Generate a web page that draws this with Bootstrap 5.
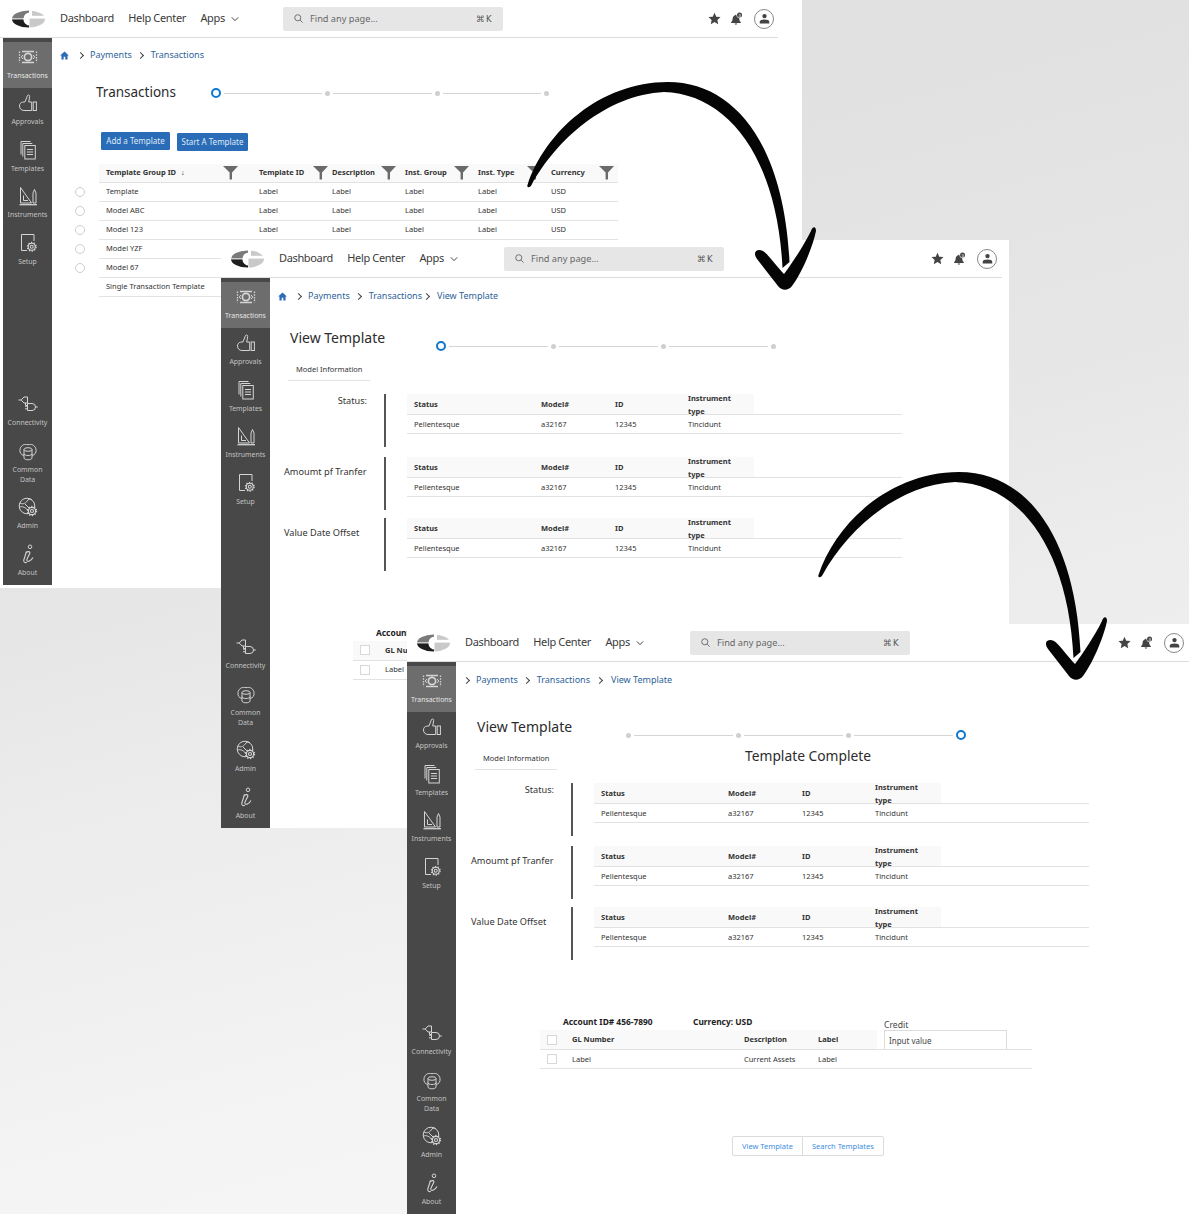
<!DOCTYPE html>
<html lang="en">
<head>
<meta charset="utf-8">
<title>Template flow</title>
<link rel="stylesheet" href="https://cdn.jsdelivr.net/npm/bootstrap@5.3.0/dist/css/bootstrap.min.css">
<style>
:root{--ink:#3d3d3d;--rail:#484848;--rule:#e2e2e2;--linkc:#2d6399}
html,body{margin:0;padding:0}
body{font-family:"Noto Sans","Open Sans",sans-serif;color:var(--ink);background:#fff}
.board{position:relative;width:1189px;height:1214px;overflow:hidden;background:linear-gradient(165deg,#e1e1e1 20%,#e6e6e6 41%,#ececec 55%,#f5f5f5 82%)}
.shot{position:absolute;background:#fff;display:flex;flex-direction:column;overflow:hidden}
.shot-a{left:0;top:0;width:802px;height:588px;z-index:1}
.shot-b{left:221px;top:240px;width:788px;height:588px;z-index:2}
.shot-c{left:407px;top:624px;width:782px;height:590px;z-index:3}
.app-bar{height:38px;flex:none;border-bottom:1px solid #dcdcdc;flex-wrap:nowrap;justify-content:flex-start;padding:0}
.shot-a .app-bar{margin-right:24px}
.shot-b .app-bar{margin-right:7px}
.brand-mark{width:33px;height:18px;margin-left:10px;margin-right:15px;flex:none;display:block}
.shot-a .brand-mark{margin-left:12px}
.top-links{width:225px;flex:none;gap:14.5px;display:flex;align-items:center;font-size:11px;letter-spacing:-.35px;color:#3a3a3a;margin:0;padding:0;list-style:none}
.shot-a .top-links{width:223px}
.top-links .nav-link{padding:0;color:#3a3a3a}
.top-links svg{width:8px;height:8px;margin-left:6px}
.finder{width:220px;height:24px;background:#e6e6e6;border-radius:2px;display:flex;align-items:center;padding:0 10px 0 11px;font-size:9.2px;color:#666;flex:none}
.finder svg{width:9px;height:9px;margin-right:7px;color:#666}
.finder kbd{margin-left:auto;background:none;color:#555;padding:0;letter-spacing:1.5px;font:8.5px "DejaVu Sans",sans-serif}
.tools{display:flex;align-items:center;margin-left:205px;color:#444}
.shot-b .tools{margin-left:207px}
.shot-c .tools{margin-left:208px}
.tools .ico{width:13px;height:13px}
.tools .ico+.ico{margin-left:9px}
.who{width:20px;height:20px;border-radius:50%;border:1px solid #888;display:flex;align-items:center;justify-content:center;margin-left:11px}
.who svg{width:11px;height:11px}
.body-row{flex:1;display:flex;min-height:0}
.rail{width:49px;flex:none;background:var(--rail);display:flex;flex-direction:column;padding-top:4px;color:#c2c2c2}
.shot-a .rail{margin-left:3px;margin-bottom:3px}
.rail-item{display:flex;flex-direction:column;align-items:center;padding:5px 0 7.4px;font-size:6.9px;line-height:10px;text-align:center}
.rail-item svg{width:20px;height:20px;margin-bottom:4px;color:#d4d4d4}
.rail-item.on{background:#6d6d6d;color:#e6e6e6}
.rail-low{margin-top:auto}
.pane{flex:1;min-width:0;position:relative}
.shot-c .pane{padding-left:1px}
.crumbs{margin:11px 0 0 8px;height:14px;align-items:center;font-size:9px;flex-wrap:nowrap}
.shot-a .crumbs{margin-top:10px}
.shot-c .crumbs{margin-left:0}
.crumbs .breadcrumb-item{padding:0;color:var(--linkc);white-space:nowrap;display:flex;align-items:center}
.crumbs .breadcrumb-item::before{content:"";float:none;padding:0;display:block;width:5px;height:5px;border-top:1px solid #444;border-right:1px solid #444;transform:rotate(45deg);margin:0 7.5px 0 6.5px}
.crumbs .home-crumb::before{content:none}
.crumbs .tight::before{margin:0 7.5px 0 2.5px}
.crumbs .nudge::before{margin:0 8.5px 0 7.5px}
.crumbs a{color:var(--linkc);text-decoration:none}
.crumbs svg{width:9px;height:9px;display:block;margin-right:2px}
.head-row{display:flex;align-items:flex-start;height:24px;margin:23px 0 0 20px}
.shot-a .head-row{margin:18px 0 0 44px}
.shot-c .head-row{margin-top:28px}
.page-title{font-size:14px;line-height:24px;margin:0;font-weight:400;color:#2c2c2c;width:146px;flex:none}
.shot-a .page-title{width:115px;font-size:13.5px}
.shot-c .page-title{width:149px}
.stepper{display:flex;align-items:center;width:340px;height:10px;margin-top:15px;gap:3px}
.shot-a .stepper{margin-top:8px;width:338px}
.step-line{flex:1;height:1px;background:#d5d5d5}
.step-dot{width:5px;height:5px;border-radius:50%;background:#cfcfcf;flex:none}
.step-now{width:10px;height:10px;border-radius:50%;border:2.5px solid #0b78d1;background:#fff;flex:none}
.act-row{gap:7px;margin:28px 0 0 49px;align-items:flex-start}
.act-row .btn{background:#2b6cb8;border-color:#2b6cb8;color:#dfe9f5;font-size:8px;line-height:12px;padding:2px 0;height:18px;border-radius:1px}
.act-row .btn:first-child{width:69px}
.act-row .btn+.btn{width:71px;margin-top:1px}
.list-tbl{table-layout:fixed;width:548px;margin:13px 0 0 18px;font-size:7.5px;color:#333}
.list-tbl th,.list-tbl td{padding:0 7px;height:19px;vertical-align:middle;border-bottom:1px solid var(--rule);color:#333;background:transparent;box-shadow:none;white-space:nowrap}
.list-tbl th{background:#f9f9f9;font-weight:700;height:18px}
.list-tbl .pick{width:29px;padding:0;border:0;background:transparent;text-align:left}
.list-tbl .w1{width:153px}.list-tbl .w2{width:73px}.list-tbl .w3{width:74px}
.th-flex{display:flex;align-items:center;justify-content:space-between}
.th-flex svg{width:15px;height:15px;flex:none;color:#6a6a6a}
.w1 .th-flex{padding-right:7px}
.w2 .th-flex{margin-right:-9.5px}
.w2.pr-a .th-flex{margin-right:-4.5px}
.pr-b .th-flex{margin-right:-2.5px}
.arr{font-weight:400;margin-left:3px}
.pick-dot{width:10px;height:10px;margin:0 0 0 5px;border-color:#cfcfcf;display:block}
.tab-row{display:flex;align-items:flex-start;margin:8px 0 0 18px;height:23px}
.tab-name{width:82px;padding:0 0 0 8px;height:23px;line-height:22px;font-size:7.5px;border-bottom:1px solid var(--rule);color:#333;white-space:nowrap;margin:0;flex:none}
.done-title{font-size:13.8px;line-height:20px;margin:-1px 0 0 188px;white-space:nowrap;font-weight:400;color:#2c2c2c}
.facts{display:flex;margin:10px 0 0 14px;height:53px}
.facts-first{margin-top:13px}
.facts-last{margin-top:8px}
.fact-name{width:83px;flex:none;font-size:9.2px;line-height:14px;padding-top:8px;white-space:nowrap;color:#333}
.facts-first .fact-name{padding-top:0;text-align:right}
.fact-rule{width:1.5px;background:#555;margin-left:17px;flex:none}
.fact-tbl{table-layout:fixed;width:495px;margin:0 0 0 21.5px;font-size:7.5px;align-self:flex-start}
.fact-tbl th,.fact-tbl td{padding:1px 7px 0;border-bottom:1px solid var(--rule);vertical-align:middle;color:#333;background:transparent;box-shadow:none;height:19px}
.fact-tbl th{height:20px;background:#f9f9f9;font-weight:700}
.fact-tbl .c1{width:127px}.fact-tbl .c2{width:74px}.fact-tbl .c3{width:73px}.fact-tbl .c4{width:73px}
.fact-tbl th.c5{width:148px;background:transparent}
.wrap-th{display:block;line-height:12.5px;margin:-3px 0;white-space:normal}
.acct{margin:55px 0 0 83px;width:492px}
.acct-top{display:flex;align-items:flex-end;height:14px;font-size:8.4px;font-weight:700;color:#222;padding-left:23px;white-space:nowrap}
.acct-top span{width:130px;flex:none}
.acct-top span+span{width:191px}
.acct-top label{font-weight:400;font-size:8.6px;color:#444;margin:0 0 -2px;line-height:12px}
.acct-tbl{table-layout:fixed;width:492px;margin:1px 0 0;font-size:7.5px}
.acct-tbl th,.acct-tbl td{padding:1px 7px 0;height:19px;border-bottom:1px solid var(--rule);vertical-align:middle;color:#333;background:transparent;box-shadow:none;white-space:nowrap}
.acct-tbl th{background:#f9f9f9;font-weight:700}
.acct-tbl .a0{width:25px;padding:0}.acct-tbl .a1{width:172px}.acct-tbl .a2{width:74px}.acct-tbl .a3{width:66px}.acct-tbl .a4{width:155px;background:#fff;vertical-align:top;padding-top:0}
input.box-tick[type=checkbox]{width:10px;height:10px;margin:0 0 0 7px;border-radius:0;border-color:#d8d8d8;display:block}
.credit-in{width:123px;height:19px;min-height:0;font-size:8px;padding:0 4px;border-radius:0;border-color:#dcdcdc;border-bottom:0;color:#444;background:#fff}
.foot-btns{margin:67px 0 0 192px}
.foot-btns .btn{background:#fff;border-color:#dcdcdc;color:#3d8ee2;font-size:7.5px;height:20px;line-height:18px;padding:0 9px;border-radius:2px}
.arrows{position:absolute;left:0;top:0;width:1189px;height:1214px;z-index:5;pointer-events:none}
</style>
</head>
<body>
<svg width="0" height="0" style="position:absolute" aria-hidden="true">
<defs>
<clipPath id="logoclip"><ellipse cx="16.5" cy="9" rx="16.5" ry="8.6"/></clipPath>
<symbol id="i-logo" viewBox="0 0 33 18"><g clip-path="url(#logoclip)"><rect x="0" y="0" width="17" height="8.4" fill="#7a7a7a"/><rect x="0" y="9.4" width="17" height="9" fill="#1e1e1e"/><circle cx="18" cy="9" r="6.6" fill="#fff"/><rect x="20" y="0" width="13" height="5.8" fill="#c9c9c9"/><rect x="17.5" y="8.6" width="15.5" height="10" fill="#c9c9c9"/></g></symbol>
<symbol id="i-chev" viewBox="0 0 10 10"><path d="M1 3l4 4 4-4" fill="none" stroke="currentColor" stroke-width="1.2"/></symbol>
<symbol id="i-search" viewBox="0 0 10 10"><circle cx="4.2" cy="4.2" r="3.4" fill="none" stroke="currentColor"/><path d="M6.8 6.8L9.6 9.6" stroke="currentColor"/></symbol>
<symbol id="i-star" viewBox="0 0 14 14"><path d="M7 .8l1.9 4.2 4.6.5-3.4 3.1.9 4.6L7 10.9l-4 2.3.9-4.6L.5 5.5l4.6-.5z" fill="currentColor"/></symbol>
<symbol id="i-bell" viewBox="0 0 14 14"><path d="M5.600 3.400C3.600 4 2.800 5.600 2.800 7.200c0 1.600-.6 2.800-1.600 3.700v.9h10.400v-.9c-1-.9-1.600-2.100-1.600-3.700 0-1.600-.8-3.200-2.800-3.800C7 2.500 5.800 2.500 5.600 3.400zM5 12.400h2.800c0 1.600-2.800 1.600-2.800 0z" fill="currentColor"/><circle cx="10.300" cy="3.300" r="3.300" fill="#fff"/><circle cx="10.300" cy="3.300" r="2.700" fill="#444"/><text x="10.300" y="5" text-anchor="middle" font-size="4.600" fill="#fff" font-family="Liberation Sans">3</text></symbol>
<symbol id="i-person" viewBox="0 0 12 12"><circle cx="6" cy="3.400" r="2.400" fill="currentColor"/><path d="M.8 11.400V9.600C.8 7.800 3 7 6 7s5.200.8 5.200 2.600v1.800z" fill="currentColor"/></symbol>
<symbol id="i-home" viewBox="0 0 10 10"><path d="M5 .6L.2 5h1.400v4.400h2.500V6.400h1.800v3h2.500V5h1.400z" fill="#2b6cb8"/></symbol>
<symbol id="i-funnel" viewBox="0 0 15 15"><path d="M0 1h15L9 7.600V14.500H6.600V7.600z" fill="currentColor"/></symbol>
<symbol id="i-cash" viewBox="0 0 20 20" fill="none" stroke="currentColor"><path d="M4 4.500h12M4 15.500h12" stroke-width="1.400"/><path d="M1.500 4.500v11M18.500 4.500v11" stroke-width="1.300" stroke-dasharray="1.500 1.200"/><circle cx="10" cy="10" r="3.600" stroke-width="1.700"/><path d="M5 8l-1.800 2L5 12M15 8l1.800 2L15 12"/></symbol>
<symbol id="i-thumb" viewBox="0 0 20 20" fill="none" stroke="currentColor"><path d="M1.500 13c0-2.200 1.300-3.600 3-3.800l2.500-.3L9.500 2.500c.7-1 2.500-.5 2.200 1L10.700 9h3v8.500H6C3.300 17.500 1.500 15.500 1.500 13z"/><rect x="15.200" y="9" width="3.200" height="8.500"/></symbol>
<symbol id="i-docs" viewBox="0 0 20 20" fill="none" stroke="currentColor"><path d="M3 14.500V1.500h9.500M4.800 16.500V3.500h9.500"/><rect x="6.800" y="5.500" width="10.500" height="13.500"/><path d="M9 9.500h6M9 12h6M9 14.500h6" stroke-width="1.100"/></symbol>
<symbol id="i-ruler" viewBox="0 0 20 20" fill="none" stroke="currentColor"><path d="M2.500 1.500V17H13.500z"/><path d="M5.500 9.500V14.500H10"/><path d="M15 7l1.500-3.500L18 7v10h-3z"/><path d="M1.500 18.700h17.500" stroke-width="1.300"/></symbol>
<symbol id="i-gear" viewBox="0 0 10 10" fill="none" stroke="currentColor"><circle cx="5" cy="5" r="3.300" fill="#484848"/><circle cx="5" cy="5" r="1.400"/><circle cx="5" cy="5" r="4.100" stroke-width="1.300" stroke-dasharray="1.200 1.380"/></symbol>
<symbol id="i-setup" viewBox="0 0 20 20" fill="none" stroke="currentColor"><path d="M16 8V1.500H3.500v16H9"/><use href="#i-gear" x="8.500" y="8.500" width="10.500" height="10.500"/></symbol>
<symbol id="i-plug" viewBox="0 0 20 20" fill="none" stroke="currentColor"><path d="M9.500 3H6L3.200 6 6 9h3.500zM.5 6h2.700M7.500 9v2.500h2"/><path d="M9.500 9.500h4.500a3.500 3.500 0 0 1 0 7H9.500zM17.500 13h2.300M7 12.200h2.500M7 14.800h2.500"/></symbol>
<symbol id="i-data" viewBox="0 0 20 20" fill="none" stroke="currentColor"><path d="M6 14.500C3 14 1.500 11.500 2 8.500 2.500 5 5.500 3 8.500 3.500c1 .2 2 .2 3 0C14.500 3 17.500 5 18 8.500c.5 3-1 5.500-4 6"/><ellipse cx="10" cy="8.500" rx="4" ry="1.800"/><path d="M6 8.500v8.500c0 1 1.800 1.800 4 1.800s4-.8 4-1.800V8.500M6 12.700c0 1 1.800 1.800 4 1.800s4-.8 4-1.800"/></symbol>
<symbol id="i-globe" viewBox="0 0 20 20" fill="none" stroke="currentColor"><circle cx="9" cy="9" r="7.800"/><path d="M2 6c3 2 6 0 8-3 1-1.500 3-1 4 0M1.500 10c3-1 6 .5 8 3s2 3 1.500 4M7 7l5 5"/><use href="#i-gear" x="8.500" y="8.500" width="11" height="11"/></symbol>
<symbol id="i-info" viewBox="0 0 20 20" fill="none" stroke="currentColor"><circle cx="12" cy="2.800" r="1.800"/><path d="M8 8.500c2-1.300 4.300-1.200 3.800.8L9 15c-.8 2 .6 2.900 2.400 2 1.400-.7 2.800-2.100 3.600-3.500" stroke-width="1.100"/><path d="M8.500 7.500l-2.700 8.500c-.5 2 1 3 3 2.500" stroke-width="1.100"/></symbol>
<symbol id="i-arrow" viewBox="0 0 1189 1214"><path d="M527.500 185C545 132 600 82 668 82 735 82 784 145 789.500 262L782.500 268C777 157 728 94 664 92 606 95 556 140 531.500 185 530 188 526.500 188 527.500 185Z" fill="#050505"/><path d="M811 231C812 227 816 225 816 231 812 250 800 276 792 286 788 291 782 291 778 286L757 259C752 252 757 248 763 251 768 254 778 268 784 274 793 262 804 245 811 231Z" fill="#050505"/></symbol>
</defs>
</svg>

<div class="board">

<section class="shot shot-a">
 <nav class="navbar navbar-expand app-bar">
  <svg class="brand-mark"><use href="#i-logo"/></svg>
  <ul class="top-links"><li class="nav-item"><a class="nav-link" href="#">Dashboard</a></li><li class="nav-item"><a class="nav-link" href="#">Help Center</a></li><li class="nav-item"><a class="nav-link" href="#">Apps<svg><use href="#i-chev"/></svg></a></li></ul>
  <div class="finder"><svg><use href="#i-search"/></svg>Find any page...<kbd>⌘K</kbd></div>
  <div class="tools"><svg class="ico"><use href="#i-star"/></svg><svg class="ico"><use href="#i-bell"/></svg><span class="who"><svg><use href="#i-person"/></svg></span></div>
 </nav>
 <div class="body-row">
  <aside class="rail">
   <div class="rail-item on"><svg><use href="#i-cash"/></svg>Transactions</div>
   <div class="rail-item"><svg><use href="#i-thumb"/></svg>Approvals</div>
   <div class="rail-item"><svg><use href="#i-docs"/></svg>Templates</div>
   <div class="rail-item"><svg><use href="#i-ruler"/></svg>Instruments</div>
   <div class="rail-item"><svg><use href="#i-setup"/></svg>Setup</div>
   <div class="rail-low">
    <div class="rail-item"><svg><use href="#i-plug"/></svg>Connectivity</div>
    <div class="rail-item"><svg><use href="#i-data"/></svg>Common<br>Data</div>
    <div class="rail-item"><svg><use href="#i-globe"/></svg>Admin</div>
    <div class="rail-item"><svg><use href="#i-info"/></svg>About</div>
   </div>
  </aside>
  <main class="pane">
   <ol class="breadcrumb crumbs"><li class="breadcrumb-item home-crumb"><svg><use href="#i-home"/></svg></li><li class="breadcrumb-item"><a href="#">Payments</a></li><li class="breadcrumb-item"><a href="#">Transactions</a></li></ol>
   <div class="head-row"><h1 class="page-title">Transactions</h1><div class="stepper"><span class="step-now"></span><span class="step-line"></span><span class="step-dot"></span><span class="step-line"></span><span class="step-dot"></span><span class="step-line"></span><span class="step-dot"></span></div></div>
   <div class="d-flex act-row"><button class="btn btn-primary" type="button">Add a Template</button><button class="btn btn-primary" type="button">Start A Template</button></div>
   <table class="table list-tbl">
    <thead><tr><th class="pick"></th><th class="w1"><div class="th-flex"><span>Template Group ID <span class="arr">↓</span></span><svg><use href="#i-funnel"/></svg></div></th><th class="w2"><div class="th-flex"><span>Template ID</span><svg><use href="#i-funnel"/></svg></div></th><th class="w2 pr-a"><div class="th-flex"><span>Description</span><svg><use href="#i-funnel"/></svg></div></th><th class="w2 pr-a"><div class="th-flex"><span>Inst. Group</span><svg><use href="#i-funnel"/></svg></div></th><th class="w2 pr-a"><div class="th-flex"><span>Inst. Type</span><svg><use href="#i-funnel"/></svg></div></th><th class="w3 pr-b"><div class="th-flex"><span>Currency</span><svg><use href="#i-funnel"/></svg></div></th></tr></thead>
    <tbody>
     <tr><td class="pick"><input class="form-check-input pick-dot" type="radio" name="tpl" aria-label="Template"></td><td>Template</td><td>Label</td><td>Label</td><td>Label</td><td>Label</td><td>USD</td></tr>
     <tr><td class="pick"><input class="form-check-input pick-dot" type="radio" name="tpl" aria-label="Model ABC"></td><td>Model ABC</td><td>Label</td><td>Label</td><td>Label</td><td>Label</td><td>USD</td></tr>
     <tr><td class="pick"><input class="form-check-input pick-dot" type="radio" name="tpl" aria-label="Model 123"></td><td>Model 123</td><td>Label</td><td>Label</td><td>Label</td><td>Label</td><td>USD</td></tr>
     <tr><td class="pick"><input class="form-check-input pick-dot" type="radio" name="tpl" aria-label="Model YZF"></td><td>Model YZF</td><td></td><td></td><td></td><td></td><td></td></tr>
     <tr><td class="pick"><input class="form-check-input pick-dot" type="radio" name="tpl" aria-label="Model 67"></td><td>Model 67</td><td></td><td></td><td></td><td></td><td></td></tr>
     <tr><td class="pick"></td><td>Single Transaction Template</td><td></td><td></td><td></td><td></td><td></td></tr>
    </tbody>
   </table>
  </main>
 </div>
</section>

<section class="shot shot-b">
 <nav class="navbar navbar-expand app-bar">
  <svg class="brand-mark"><use href="#i-logo"/></svg>
  <ul class="top-links"><li class="nav-item"><a class="nav-link" href="#">Dashboard</a></li><li class="nav-item"><a class="nav-link" href="#">Help Center</a></li><li class="nav-item"><a class="nav-link" href="#">Apps<svg><use href="#i-chev"/></svg></a></li></ul>
  <div class="finder"><svg><use href="#i-search"/></svg>Find any page...<kbd>⌘K</kbd></div>
  <div class="tools"><svg class="ico"><use href="#i-star"/></svg><svg class="ico"><use href="#i-bell"/></svg><span class="who"><svg><use href="#i-person"/></svg></span></div>
 </nav>
 <div class="body-row">
  <aside class="rail">
   <div class="rail-item on"><svg><use href="#i-cash"/></svg>Transactions</div>
   <div class="rail-item"><svg><use href="#i-thumb"/></svg>Approvals</div>
   <div class="rail-item"><svg><use href="#i-docs"/></svg>Templates</div>
   <div class="rail-item"><svg><use href="#i-ruler"/></svg>Instruments</div>
   <div class="rail-item"><svg><use href="#i-setup"/></svg>Setup</div>
   <div class="rail-low">
    <div class="rail-item"><svg><use href="#i-plug"/></svg>Connectivity</div>
    <div class="rail-item"><svg><use href="#i-data"/></svg>Common<br>Data</div>
    <div class="rail-item"><svg><use href="#i-globe"/></svg>Admin</div>
    <div class="rail-item"><svg><use href="#i-info"/></svg>About</div>
   </div>
  </aside>
  <main class="pane">
   <ol class="breadcrumb crumbs"><li class="breadcrumb-item home-crumb"><svg><use href="#i-home"/></svg></li><li class="breadcrumb-item"><a href="#">Payments</a></li><li class="breadcrumb-item"><a href="#">Transactions</a></li><li class="breadcrumb-item tight"><a href="#">View Template</a></li></ol>
   <div class="head-row"><h1 class="page-title">View Template</h1><div class="stepper"><span class="step-now"></span><span class="step-line"></span><span class="step-dot"></span><span class="step-line"></span><span class="step-dot"></span><span class="step-line"></span><span class="step-dot"></span></div></div>
   <div class="tab-row"><p class="tab-name">Model Information</p></div>
   <div class="facts facts-first"><div class="fact-name">Status:</div><div class="fact-rule"></div>
    <table class="table fact-tbl"><thead><tr><th class="c1">Status</th><th class="c2">Model#</th><th class="c3">ID</th><th class="c4"><span class="wrap-th">Instrument type</span></th><th class="c5"></th></tr></thead><tbody><tr><td>Pellentesque</td><td>a32167</td><td>12345</td><td>Tincidunt</td><td></td></tr></tbody></table></div>
   <div class="facts"><div class="fact-name">Amoumt pf Tranfer</div><div class="fact-rule"></div>
    <table class="table fact-tbl"><thead><tr><th class="c1">Status</th><th class="c2">Model#</th><th class="c3">ID</th><th class="c4"><span class="wrap-th">Instrument type</span></th><th class="c5"></th></tr></thead><tbody><tr><td>Pellentesque</td><td>a32167</td><td>12345</td><td>Tincidunt</td><td></td></tr></tbody></table></div>
   <div class="facts facts-last"><div class="fact-name">Value Date Offset</div><div class="fact-rule"></div>
    <table class="table fact-tbl"><thead><tr><th class="c1">Status</th><th class="c2">Model#</th><th class="c3">ID</th><th class="c4"><span class="wrap-th">Instrument type</span></th><th class="c5"></th></tr></thead><tbody><tr><td>Pellentesque</td><td>a32167</td><td>12345</td><td>Tincidunt</td><td></td></tr></tbody></table></div>
   <div class="acct">
    <div class="acct-top"><span>Account ID# 456-7890</span></div>
    <table class="table acct-tbl"><thead><tr><th class="a0"><input class="form-check-input box-tick" type="checkbox" aria-label="All"></th><th class="a1">GL Number</th><th class="a2"></th><th class="a3"></th><th class="a4"></th></tr></thead><tbody><tr><td class="a0"><input class="form-check-input box-tick" type="checkbox" aria-label="Row"></td><td>Label</td><td></td><td></td><td></td></tr></tbody></table>
   </div>
  </main>
 </div>
</section>

<section class="shot shot-c">
 <nav class="navbar navbar-expand app-bar">
  <svg class="brand-mark"><use href="#i-logo"/></svg>
  <ul class="top-links"><li class="nav-item"><a class="nav-link" href="#">Dashboard</a></li><li class="nav-item"><a class="nav-link" href="#">Help Center</a></li><li class="nav-item"><a class="nav-link" href="#">Apps<svg><use href="#i-chev"/></svg></a></li></ul>
  <div class="finder"><svg><use href="#i-search"/></svg>Find any page...<kbd>⌘K</kbd></div>
  <div class="tools"><svg class="ico"><use href="#i-star"/></svg><svg class="ico"><use href="#i-bell"/></svg><span class="who"><svg><use href="#i-person"/></svg></span></div>
 </nav>
 <div class="body-row">
  <aside class="rail">
   <div class="rail-item on"><svg><use href="#i-cash"/></svg>Transactions</div>
   <div class="rail-item"><svg><use href="#i-thumb"/></svg>Approvals</div>
   <div class="rail-item"><svg><use href="#i-docs"/></svg>Templates</div>
   <div class="rail-item"><svg><use href="#i-ruler"/></svg>Instruments</div>
   <div class="rail-item"><svg><use href="#i-setup"/></svg>Setup</div>
   <div class="rail-low">
    <div class="rail-item"><svg><use href="#i-plug"/></svg>Connectivity</div>
    <div class="rail-item"><svg><use href="#i-data"/></svg>Common<br>Data</div>
    <div class="rail-item"><svg><use href="#i-globe"/></svg>Admin</div>
    <div class="rail-item"><svg><use href="#i-info"/></svg>About</div>
   </div>
  </aside>
  <main class="pane">
   <ol class="breadcrumb crumbs"><li class="breadcrumb-item"><a href="#">Payments</a></li><li class="breadcrumb-item"><a href="#">Transactions</a></li><li class="breadcrumb-item nudge"><a href="#">View Template</a></li></ol>
   <div class="head-row"><h1 class="page-title">View Template</h1><div class="stepper"><span class="step-dot"></span><span class="step-line"></span><span class="step-dot"></span><span class="step-line"></span><span class="step-dot"></span><span class="step-line"></span><span class="step-now"></span></div></div>
   <div class="tab-row"><p class="tab-name">Model Information</p><h2 class="done-title">Template Complete</h2></div>
   <div class="facts facts-first"><div class="fact-name">Status:</div><div class="fact-rule"></div>
    <table class="table fact-tbl"><thead><tr><th class="c1">Status</th><th class="c2">Model#</th><th class="c3">ID</th><th class="c4"><span class="wrap-th">Instrument type</span></th><th class="c5"></th></tr></thead><tbody><tr><td>Pellentesque</td><td>a32167</td><td>12345</td><td>Tincidunt</td><td></td></tr></tbody></table></div>
   <div class="facts"><div class="fact-name">Amoumt pf Tranfer</div><div class="fact-rule"></div>
    <table class="table fact-tbl"><thead><tr><th class="c1">Status</th><th class="c2">Model#</th><th class="c3">ID</th><th class="c4"><span class="wrap-th">Instrument type</span></th><th class="c5"></th></tr></thead><tbody><tr><td>Pellentesque</td><td>a32167</td><td>12345</td><td>Tincidunt</td><td></td></tr></tbody></table></div>
   <div class="facts facts-last"><div class="fact-name">Value Date Offset</div><div class="fact-rule"></div>
    <table class="table fact-tbl"><thead><tr><th class="c1">Status</th><th class="c2">Model#</th><th class="c3">ID</th><th class="c4"><span class="wrap-th">Instrument type</span></th><th class="c5"></th></tr></thead><tbody><tr><td>Pellentesque</td><td>a32167</td><td>12345</td><td>Tincidunt</td><td></td></tr></tbody></table></div>
   <div class="acct">
    <div class="acct-top"><span>Account ID# 456-7890</span><span>Currency: USD</span><label for="credit-in">Credit</label></div>
    <table class="table acct-tbl"><thead><tr><th class="a0"><input class="form-check-input box-tick" type="checkbox" aria-label="All"></th><th class="a1">GL Number</th><th class="a2">Description</th><th class="a3">Label</th><th class="a4"><input id="credit-in" class="form-control credit-in" type="text" value="Input value"></th></tr></thead><tbody><tr><td class="a0"><input class="form-check-input box-tick" type="checkbox" aria-label="Row"></td><td>Label</td><td>Current Assets</td><td>Label</td><td></td></tr></tbody></table>
    <div class="btn-group foot-btns" role="group"><button class="btn btn-outline-secondary" type="button">View Template</button><button class="btn btn-outline-secondary" type="button">Search Templates</button></div>
   </div>
  </main>
 </div>
</section>

<svg class="arrows" viewBox="0 0 1189 1214" aria-hidden="true"><use href="#i-arrow"/><use href="#i-arrow" x="291" y="390"/></svg>
</div>
<script src="https://cdn.jsdelivr.net/npm/bootstrap@5.3.0/dist/js/bootstrap.bundle.min.js"></script>
</body>
</html>
